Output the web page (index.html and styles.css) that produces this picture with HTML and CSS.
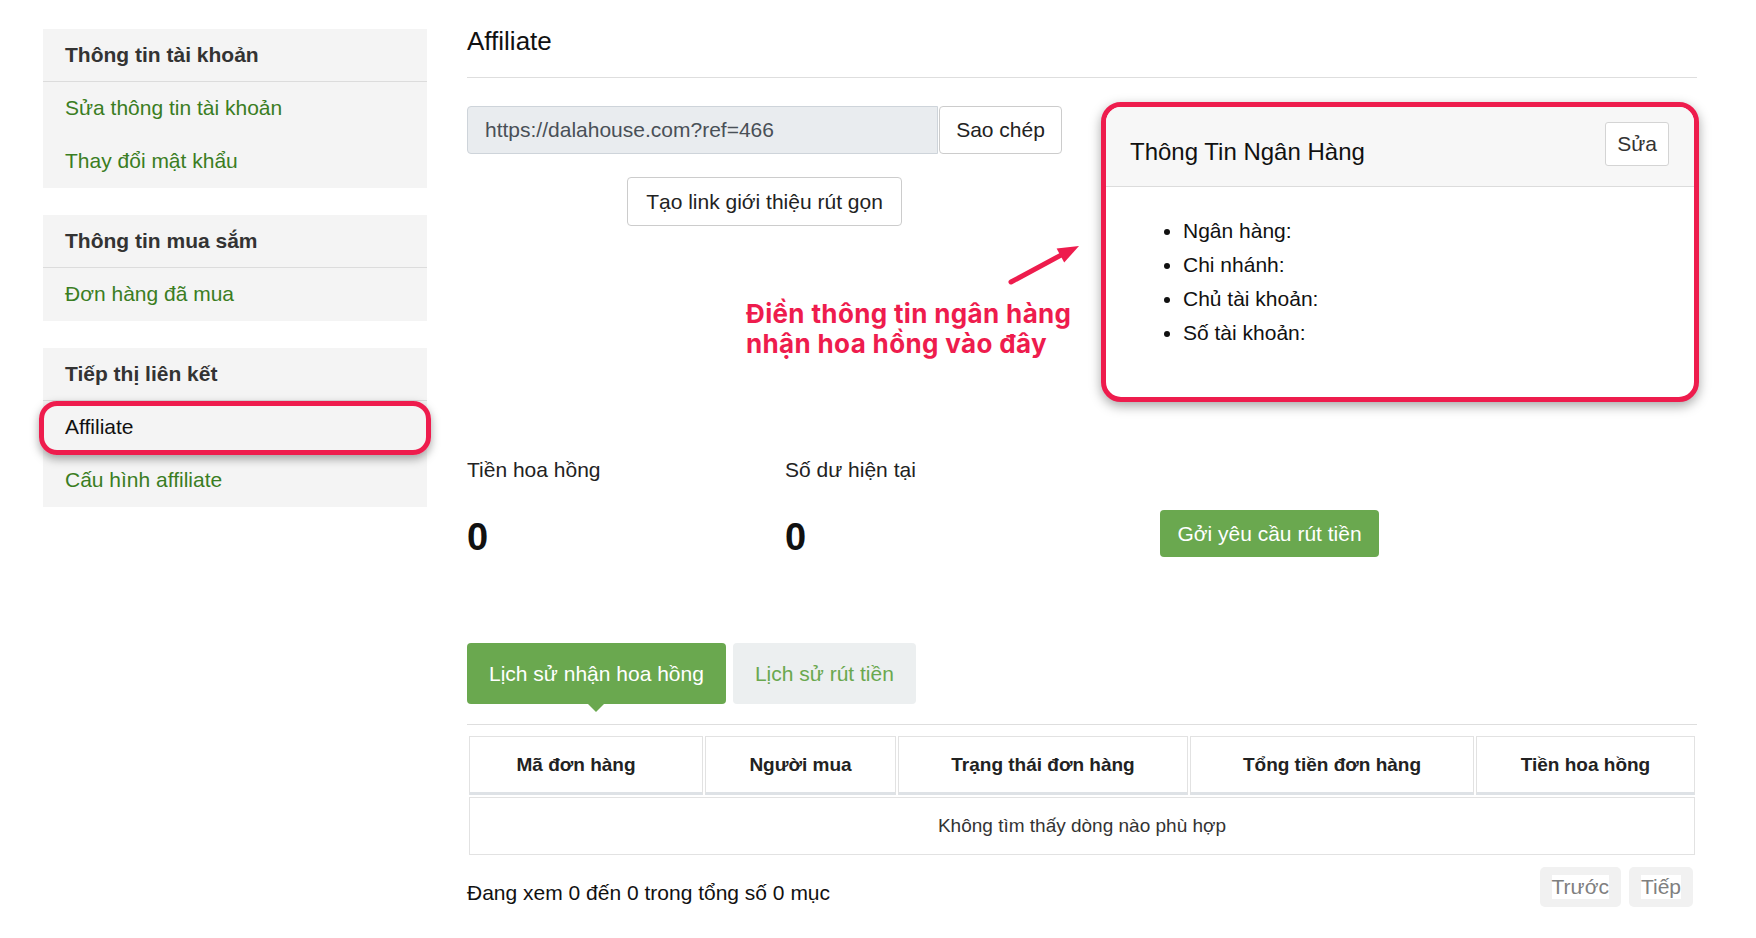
FILE: index.html
```html
<!DOCTYPE html>
<html lang="vi">
<head>
<meta charset="utf-8">
<title>Affiliate</title>
<link rel="stylesheet" href="styles.css">
</head>
<body>
<div class="page">
  <aside class="sidebar">
    <div class="side-box">
      <div class="side-head">Thông tin tài khoản</div>
      <a class="side-link">Sửa thông tin tài khoản</a>
      <a class="side-link">Thay đổi mật khẩu</a>
    </div>
    <div class="side-box">
      <div class="side-head">Thông tin mua sắm</div>
      <a class="side-link">Đơn hàng đã mua</a>
    </div>
    <div class="side-box">
      <div class="side-head">Tiếp thị liên kết</div>
      <a class="side-link active">Affiliate</a>
      <a class="side-link">Cấu hình affiliate</a>
    </div>
  </aside>

  <main class="main">
    <h2 class="title">Affiliate</h2>

    <section class="top">
      <div class="link-col">
        <div class="input-group">
          <div class="ref-input">https://dalahouse.com?ref=466</div>
          <button class="btn btn-light copy">Sao chép</button>
        </div>
        <button class="btn btn-light short">Tạo link giới thiệu rút gọn</button>
      </div>

      <div class="bank-card">
        <div class="bank-head">
          <div class="bank-title">Thông Tin Ngân Hàng</div>
          <button class="btn btn-light edit">Sửa</button>
        </div>
        <ul class="bank-list">
          <li>Ngân hàng:</li>
          <li>Chi nhánh:</li>
          <li>Chủ tài khoản:</li>
          <li>Số tài khoản:</li>
        </ul>
      </div>

      <svg class="arrow" width="80" height="50" viewBox="0 0 80 50">
        <line x1="6" y1="42" x2="57" y2="14.6" stroke="#ee1c4d" stroke-width="5" stroke-linecap="round"/>
        <polygon points="74,6 59.2,22.5 51.6,8.5" fill="#ee1c4d"/>
      </svg>
      <div class="note">Điền thông tin ngân hàng<br>nhận hoa hồng vào đây</div>
    </section>

    <section class="stats">
      <div class="stat">
        <div class="stat-label">Tiền hoa hồng</div>
        <div class="stat-value">0</div>
      </div>
      <div class="stat">
        <div class="stat-label">Số dư hiện tại</div>
        <div class="stat-value">0</div>
      </div>
      <div class="stat-action">
        <button class="btn btn-green">Gởi yêu cầu rút tiền</button>
      </div>
    </section>

    <nav class="tabs">
      <a class="tab active">Lịch sử nhận hoa hồng</a>
      <a class="tab">Lịch sử rút tiền</a>
    </nav>

    <table class="data">
      <colgroup>
        <col class="c1"><col class="c2"><col class="c3"><col class="c4"><col class="c5">
      </colgroup>
      <thead>
        <tr>
          <th class="first">Mã đơn hàng</th>
          <th>Người mua</th>
          <th>Trạng thái đơn hàng</th>
          <th>Tổng tiền đơn hàng</th>
          <th>Tiền hoa hồng</th>
        </tr>
      </thead>
      <tbody>
        <tr><td colspan="5">Không tìm thấy dòng nào phù hợp</td></tr>
      </tbody>
    </table>

    <div class="table-foot">
      <div class="info">Đang xem 0 đến 0 trong tổng số 0 mục</div>
      <div class="pager">
        <span class="page-btn"><span>Trước</span></span>
        <span class="page-btn"><span>Tiếp</span></span>
      </div>
    </div>
  </main>
</div>
</body>
</html>
```

FILE: styles.css
```css
* { box-sizing: border-box; }

html, body {
  margin: 0;
  padding: 0;
  background: #ffffff;
}

body {
  font-family: "Liberation Sans", Arial, Helvetica, sans-serif;
  font-size: 21px;
  color: #222;
}

.page {
  display: flex;
  align-items: flex-start;
  gap: 40px;
  padding-left: 43px;
}

/* Sidebar */
.sidebar {
  width: 384px;
  margin-top: 29px;
  display: flex;
  flex-direction: column;
  gap: 27px;
}

.side-box {
  background: #f4f4f4;
}

.side-head {
  height: 53px;
  line-height: 52px;
  padding-left: 22px;
  font-weight: bold;
  color: #333;
  border-bottom: 1px solid #dcdcdc;
}

.side-link {
  display: block;
  height: 53px;
  line-height: 52px;
  padding-left: 22px;
  color: #3a7d22;
  text-decoration: none;
}

.side-link.active {
  position: relative;
  color: #111;
}

.side-link.active::after {
  content: "";
  position: absolute;
  top: 0;
  bottom: -1px;
  left: -4px;
  right: -4px;
  border: 5px solid #ee1c4d;
  border-radius: 18px;
  box-shadow: 0 4px 10px rgba(0, 0, 0, 0.35);
}

/* Main */
.main {
  width: 1230px;
  margin-top: 26px;
}

.title {
  margin: 0;
  font-size: 26px;
  font-weight: normal;
  line-height: 30px;
  color: #111;
  padding-bottom: 21px;
  border-bottom: 1px solid #dedede;
}

.top {
  position: relative;
  display: flex;
  justify-content: space-between;
  align-items: flex-start;
  margin-top: 24px;
  margin-right: -2px;
}

.link-col {
  width: 595px;
  padding-top: 4px;
  display: flex;
  flex-direction: column;
  align-items: center;
}

.input-group {
  display: flex;
  width: 100%;
  gap: 1px;
}

.ref-input {
  flex: 1;
  height: 48px;
  line-height: 46px;
  padding-left: 17px;
  background: #e9ecef;
  border: 1px solid #ced4da;
  border-radius: 4px 0 0 4px;
  color: #495057;
}

.btn {
  font-family: inherit;
  font-size: 21px;
  cursor: pointer;
}

.btn-light {
  background: #fff;
  color: #222;
  border: 1px solid #ccc;
  border-radius: 4px;
}

.copy {
  width: 123px;
  height: 48px;
  padding: 0;
}

.short {
  margin-top: 23px;
  width: 275px;
  height: 49px;
  padding: 0;
}

.bank-card {
  width: 598px;
  height: 300px;
  border: 5px solid #ee1c4d;
  border-radius: 20px;
  overflow: hidden;
  background: #fff;
  box-shadow: 0 4px 12px rgba(0, 0, 0, 0.35);
}

.bank-head {
  height: 80px;
  background: #f7f7f7;
  border-bottom: 1px solid #dcdcdc;
  display: flex;
  justify-content: space-between;
  align-items: flex-start;
  padding: 15px 25px 0 24px;
}

.bank-title {
  margin-top: 15px;
  font-size: 24px;
  line-height: 30px;
  color: #111;
}

.edit {
  width: 64px;
  height: 44px;
  padding: 0;
  color: #333;
  border-color: #d4d4d4;
  border-radius: 3px;
}

.bank-list {
  margin: 0;
  padding: 27px 0 0 77px;
  list-style: disc;
  line-height: 34px;
  color: #111;
}

.arrow {
  position: absolute;
  left: 538px;
  top: 138px;
}

.note {
  position: absolute;
  left: 279px;
  top: 197px;
  font-family: "Inter", "Noto Sans", sans-serif;
  font-weight: 700;
  font-size: 26px;
  line-height: 30px;
  letter-spacing: 0.35px;
  color: #ee1c4d;
  white-space: nowrap;
}

/* Stats */
.stats {
  display: grid;
  grid-template-columns: 318px 375px auto;
  margin-top: 53px;
}

.stat-label {
  line-height: 30px;
  color: #222;
}

.stat-value {
  margin-top: 30px;
  font-size: 38px;
  font-weight: bold;
  line-height: 44px;
  color: #111;
}

.stat-action {
  padding-top: 55px;
}

.btn-green {
  height: 47px;
  width: 219px;
  padding: 0;
  background: #6aa84f;
  color: #fff;
  border: none;
  border-radius: 4px;
}

/* Tabs */
.tabs {
  display: flex;
  gap: 7px;
  margin-top: 84px;
  padding-bottom: 20px;
  border-bottom: 1px solid #dedede;
}

.tab {
  display: block;
  height: 61px;
  line-height: 61px;
  padding: 0 22px;
  border-radius: 4px;
  background: #eceff0;
  color: #6aa84f;
  text-decoration: none;
}

.tab.active {
  position: relative;
  background: #6aa84f;
  color: #fff;
}

.tab.active::after {
  content: "";
  position: absolute;
  left: 50%;
  bottom: -8px;
  margin-left: -8px;
  border-left: 8px solid transparent;
  border-right: 8px solid transparent;
  border-top: 8px solid #6aa84f;
}

/* Table */
.data {
  width: 1230px;
  margin-top: 9px;
  border-collapse: separate;
  border-spacing: 2px;
  font-size: 19px;
  table-layout: fixed;
}

.c1 { width: 234px; }
.c2 { width: 191px; }
.c3 { width: 290px; }
.c4 { width: 284px; }
.c5 { width: 219px; }

.data th {
  height: 59px;
  border: 1px solid #e2e2e2;
  border-bottom: 3px solid #dee2e6;
  font-weight: bold;
  color: #222;
  text-align: center;
  padding: 0;
}

.data th.first {
  padding-right: 20px;
}

.data td {
  height: 58px;
  border: 1px solid #e2e2e2;
  text-align: center;
  color: #333;
  padding: 0;
}

.table-foot {
  display: flex;
  justify-content: space-between;
  align-items: flex-end;
  margin-top: 10px;
  padding-right: 4px;
}

.info {
  line-height: 30px;
  color: #111;
  margin-bottom: -1px;
}

.pager {
  display: flex;
  gap: 8px;
}

.page-btn {
  display: flex;
  align-items: center;
  justify-content: center;
  height: 40px;
  padding: 0 12px;
  background: #f1f1f1;
  border-radius: 5px;
  font-size: 21px;
  color: #808080;
}

.page-btn span {
  background: #fff;
  line-height: 24px;
}
```
